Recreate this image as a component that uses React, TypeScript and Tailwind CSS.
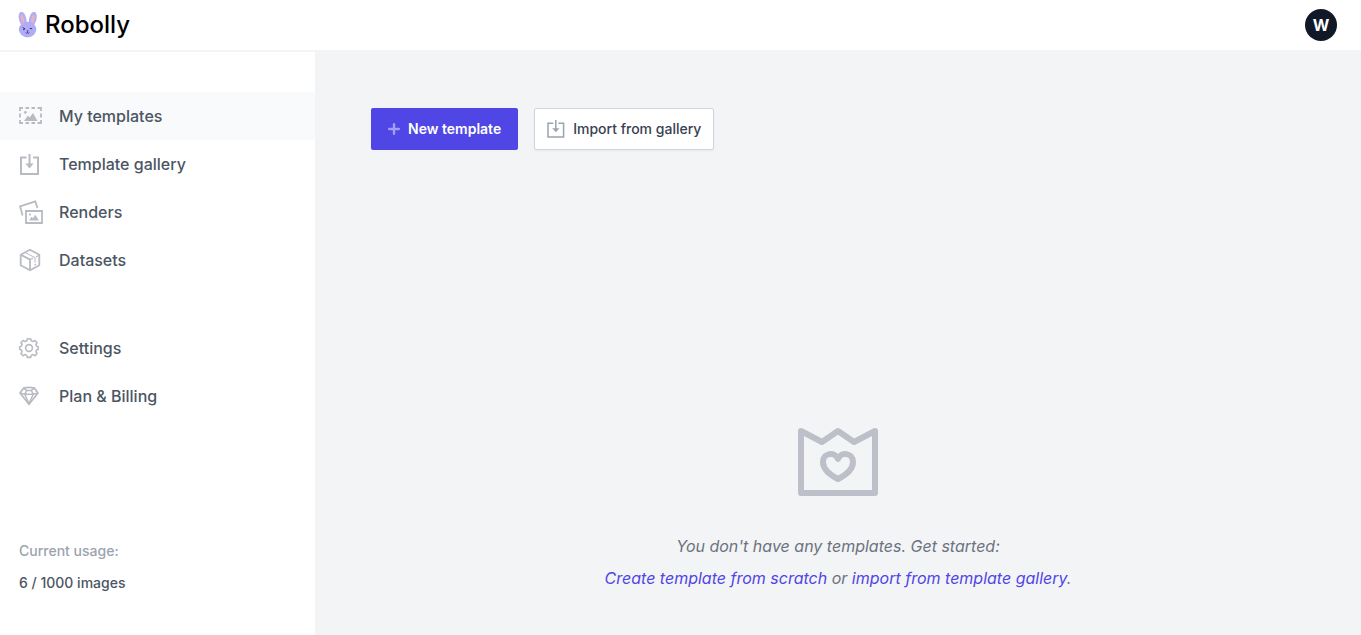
import React from "react";

const BunnyLogo = () => (
  <svg width="20" height="27" viewBox="0 0 20 27" aria-hidden="true">
    <ellipse cx="4.6" cy="7" rx="3.7" ry="7.4" transform="rotate(-13 4.6 7)" fill="#b3aef3" />
    <ellipse cx="14.8" cy="7" rx="3.7" ry="7.4" transform="rotate(13 14.8 7)" fill="#b3aef3" />
    <ellipse cx="4.6" cy="7.4" rx="1.6" ry="4.8" transform="rotate(-13 4.6 7.4)" fill="#e0b4c6" />
    <ellipse cx="14.8" cy="7.4" rx="1.6" ry="4.8" transform="rotate(13 14.8 7.4)" fill="#e0b4c6" />
    <ellipse cx="9.6" cy="17.6" rx="8.7" ry="7.8" fill="#b1acf8" />
    <path d="M4.6 15.4l2.4 1.5-2 1M11.8 16.6h2.4" stroke="#3b3768" strokeWidth="1" fill="none" />
    <path d="M8.4 18.6h2.4l-1.2 1.4z" fill="#3b3768" />
    <path d="M9.6 19.8v1.2M7.7 20.8q1 .8 1.9 0 1 .8 1.9 0" stroke="#3b3768" strokeWidth=".8" fill="none" />
  </svg>
);

const TemplatesIcon = () => (
  <svg width="24" height="24" viewBox="0 0 24 24" fill="none" stroke="currentColor" strokeWidth="1.8">
    <path d="M1 7V4h3M6.5 4H10M12.5 4H16M18.5 4H22v3M22 9.5v4M22 16v3h-3.5M16 19h-3.5M10 19H6.5M4 19H1v-3M1 13.5v-4" />
    <path d="M5 17l4-5.5 1.6 2L14 9l4.5 8z" fill="currentColor" stroke="none" />
    <circle cx="6.3" cy="8.3" r="1.4" fill="currentColor" stroke="none" />
  </svg>
);

const ImportIcon = () => (
  <svg width="24" height="24" viewBox="0 0 24 24" fill="none" stroke="currentColor" strokeWidth="2">
    <path d="M7.5 5.5H2V22h17V5.5h-5M10.5 2v11" />
    <path d="M6.5 11.5h8l-4 5z" fill="currentColor" stroke="none" />
  </svg>
);

const SmallImportIcon = () => (
  <svg width="18" height="18" viewBox="0 0 18 18" fill="none" stroke="currentColor" strokeWidth="1.5">
    <path d="M6.2 3.2H1v13.9h15.6V3.2h-5.2M8.8 0v9" />
    <path d="M5.2 8.2h7.2l-3.6 4z" fill="currentColor" stroke="none" />
  </svg>
);

const RendersIcon = () => (
  <svg width="24" height="24" viewBox="0 0 24 24" fill="none" stroke="currentColor" strokeWidth="1.8">
    <path d="M3.6 15.5L1.1 6.4 16.3 1.4l2.2 6.6" />
    <path d="M7 11h16v12H7z" />
    <path d="M10 20.5l2.6-3.8 1.4 1.5 2.2-3.5 3.8 5.8z" fill="currentColor" stroke="none" />
    <circle cx="11" cy="14.5" r="1.1" fill="currentColor" stroke="none" />
  </svg>
);

const BoxIcon = () => (
  <svg width="24" height="24" viewBox="0 0 24 24" fill="none" stroke="currentColor" strokeWidth="1.8" strokeLinejoin="round">
    <path d="M11 1.8l9.3 4.9v10.6L11 22.3l-9.3-5V6.7z" />
    <path d="M1.7 6.7l8.5 4.4q.8.4.8 1.4v9.8" />
    <path d="M7 5l9 4.6v5" strokeWidth="1" />
    <path d="M11 11.5l3-1.4M17 9l3.3-2" strokeWidth="1.2" />
    <path d="M15.5 17l1.5-.8" strokeWidth="1.4" />
  </svg>
);

const GearIcon = () => (
  <svg width="24" height="24" viewBox="0 0 24 24" fill="none" stroke="currentColor" strokeWidth="1.6" strokeLinejoin="round">
    <path d="M8.4 2.8h3.2l.6 2 1.8.8 2-1.1 2 2-1.1 2 .8 1.8 1.5.5v2.6l-1.5.5-.8 1.8 1.1 2-2 2-2-1.1-1.8.8-.6 2H8.4l-.6-2-1.8-.8-2 1.1-2-2 1.1-2-.8-1.8-1.5-.5v-2.6l1.5-.5.8-1.8-1.1-2 2-2 2 1.1 1.8-.8z" />
    <circle cx="10" cy="12" r="3.4" />
  </svg>
);

const DiamondIcon = () => (
  <svg width="24" height="24" viewBox="0 0 24 24" fill="none" stroke="currentColor" strokeWidth="1.8" strokeLinejoin="round">
    <path d="M4.5 4.2q5.5-1.6 11 0L19 9l-9 11.2L1 9z" />
    <path d="M1 9l4.8 1.2h8.4L19 9M5.8 10.2L10 19.7l4.2-9.5M4.5 4.2l3.2 2.2-1.9 3.8M15.5 4.2l-3.2 2.2 1.9 3.8M7.7 6.4h4.6" strokeWidth="1.5" />
  </svg>
);

const EmptyIcon = () => (
  <svg width="80" height="68" viewBox="0 0 80 68" fill="none" stroke="currentColor" strokeWidth="6" strokeLinejoin="round" aria-hidden="true">
    <path d="M3 3l21 11L40 3l16 11L77 3v62H3z" />
    <path d="M40 51c-6-3-15-9-15-17 0-9 12-11 15-3 3-8 15-6 15 3 0 8-9 14-15 17z" />
  </svg>
);

const mainLinks = [
  { label: "My templates", icon: <TemplatesIcon />, active: true },
  { label: "Template gallery", icon: <ImportIcon />, active: false },
  { label: "Renders", icon: <RendersIcon />, active: false },
  { label: "Datasets", icon: <BoxIcon />, active: false },
];

const accountLinks = [
  { label: "Settings", icon: <GearIcon />, active: false },
  { label: "Plan & Billing", icon: <DiamondIcon />, active: false },
];

const NavList = ({ links }: { links: typeof mainLinks }) => (
  <ul>
    {links.map((link) => (
      <li key={link.label}>
        <a
          href="#"
          className={`flex h-12 items-center gap-4 pl-[19px] text-base font-medium text-[#4b5563] ${
            link.active ? "bg-gray-50" : ""
          }`}
        >
          <span className="text-[#b9bbc3]">{link.icon}</span>
          {link.label}
        </a>
      </li>
    ))}
  </ul>
);

const App = () => {
  return (
    <div className="flex min-h-screen flex-col bg-gray-100 font-['Inter',sans-serif]">
      {/* Header */}
      <header className="flex items-center justify-between border-b-2 border-gray-100 bg-white pr-6 pl-[18px]">
        <a href="#" className="flex items-center gap-[7px] text-2xl font-medium text-black">
          <BunnyLogo />
          Robolly
        </a>
        <button className="my-[9px] h-8 w-8 rounded-full bg-[#111827] text-base font-bold text-white">W</button>
      </header>

      <div className="flex flex-1">
        {/* Sidebar */}
        <aside className="flex w-[315px] shrink-0 flex-col justify-between bg-white pt-10 pb-9">
          <nav className="flex flex-col gap-10">
            <NavList links={mainLinks} />
            <NavList links={accountLinks} />
          </nav>
          <div className="pl-[19px] text-sm leading-8 font-medium">
            <p className="text-[#9ca3af]">Current usage:</p>
            <p className="text-[#4b5563]">6 / 1000 images</p>
          </div>
        </aside>

        {/* Content */}
        <main className="flex flex-1 flex-col justify-between px-14 pt-14 pb-[41px]">
          <div className="flex gap-4">
            <button className="flex h-[42px] items-center gap-2 rounded-xs border border-transparent bg-[#4f46e5] px-4 text-sm font-semibold text-white">
              <svg width="12" height="12" viewBox="0 0 12 12" stroke="#a39ef2" strokeWidth="2.4" strokeLinecap="round">
                <path d="M6 1.2v9.6M1.2 6h9.6" />
              </svg>
              New template
            </button>
            <button className="flex h-[42px] items-center gap-2 rounded-xs border border-[#d1d5db] bg-white px-3 text-sm font-medium text-[#374151] shadow-xs">
              <span className="text-[#9ca3af]">
                <SmallImportIcon />
              </span>
              Import from gallery
            </button>
          </div>

          <div className="flex flex-col items-center text-base leading-8 text-[#6b7280] italic">
            <span className="mb-[34px] text-[#bdc0c8]">
              <EmptyIcon />
            </span>
            <p>You don't have any templates. Get started:</p>
            <p>
              <a href="#" className="text-[#4f46e5]">Create template from scratch</a> or{" "}
              <a href="#" className="text-[#4f46e5]">import from template gallery</a>.
            </p>
          </div>
        </main>
      </div>
    </div>
  );
};

export default App;
